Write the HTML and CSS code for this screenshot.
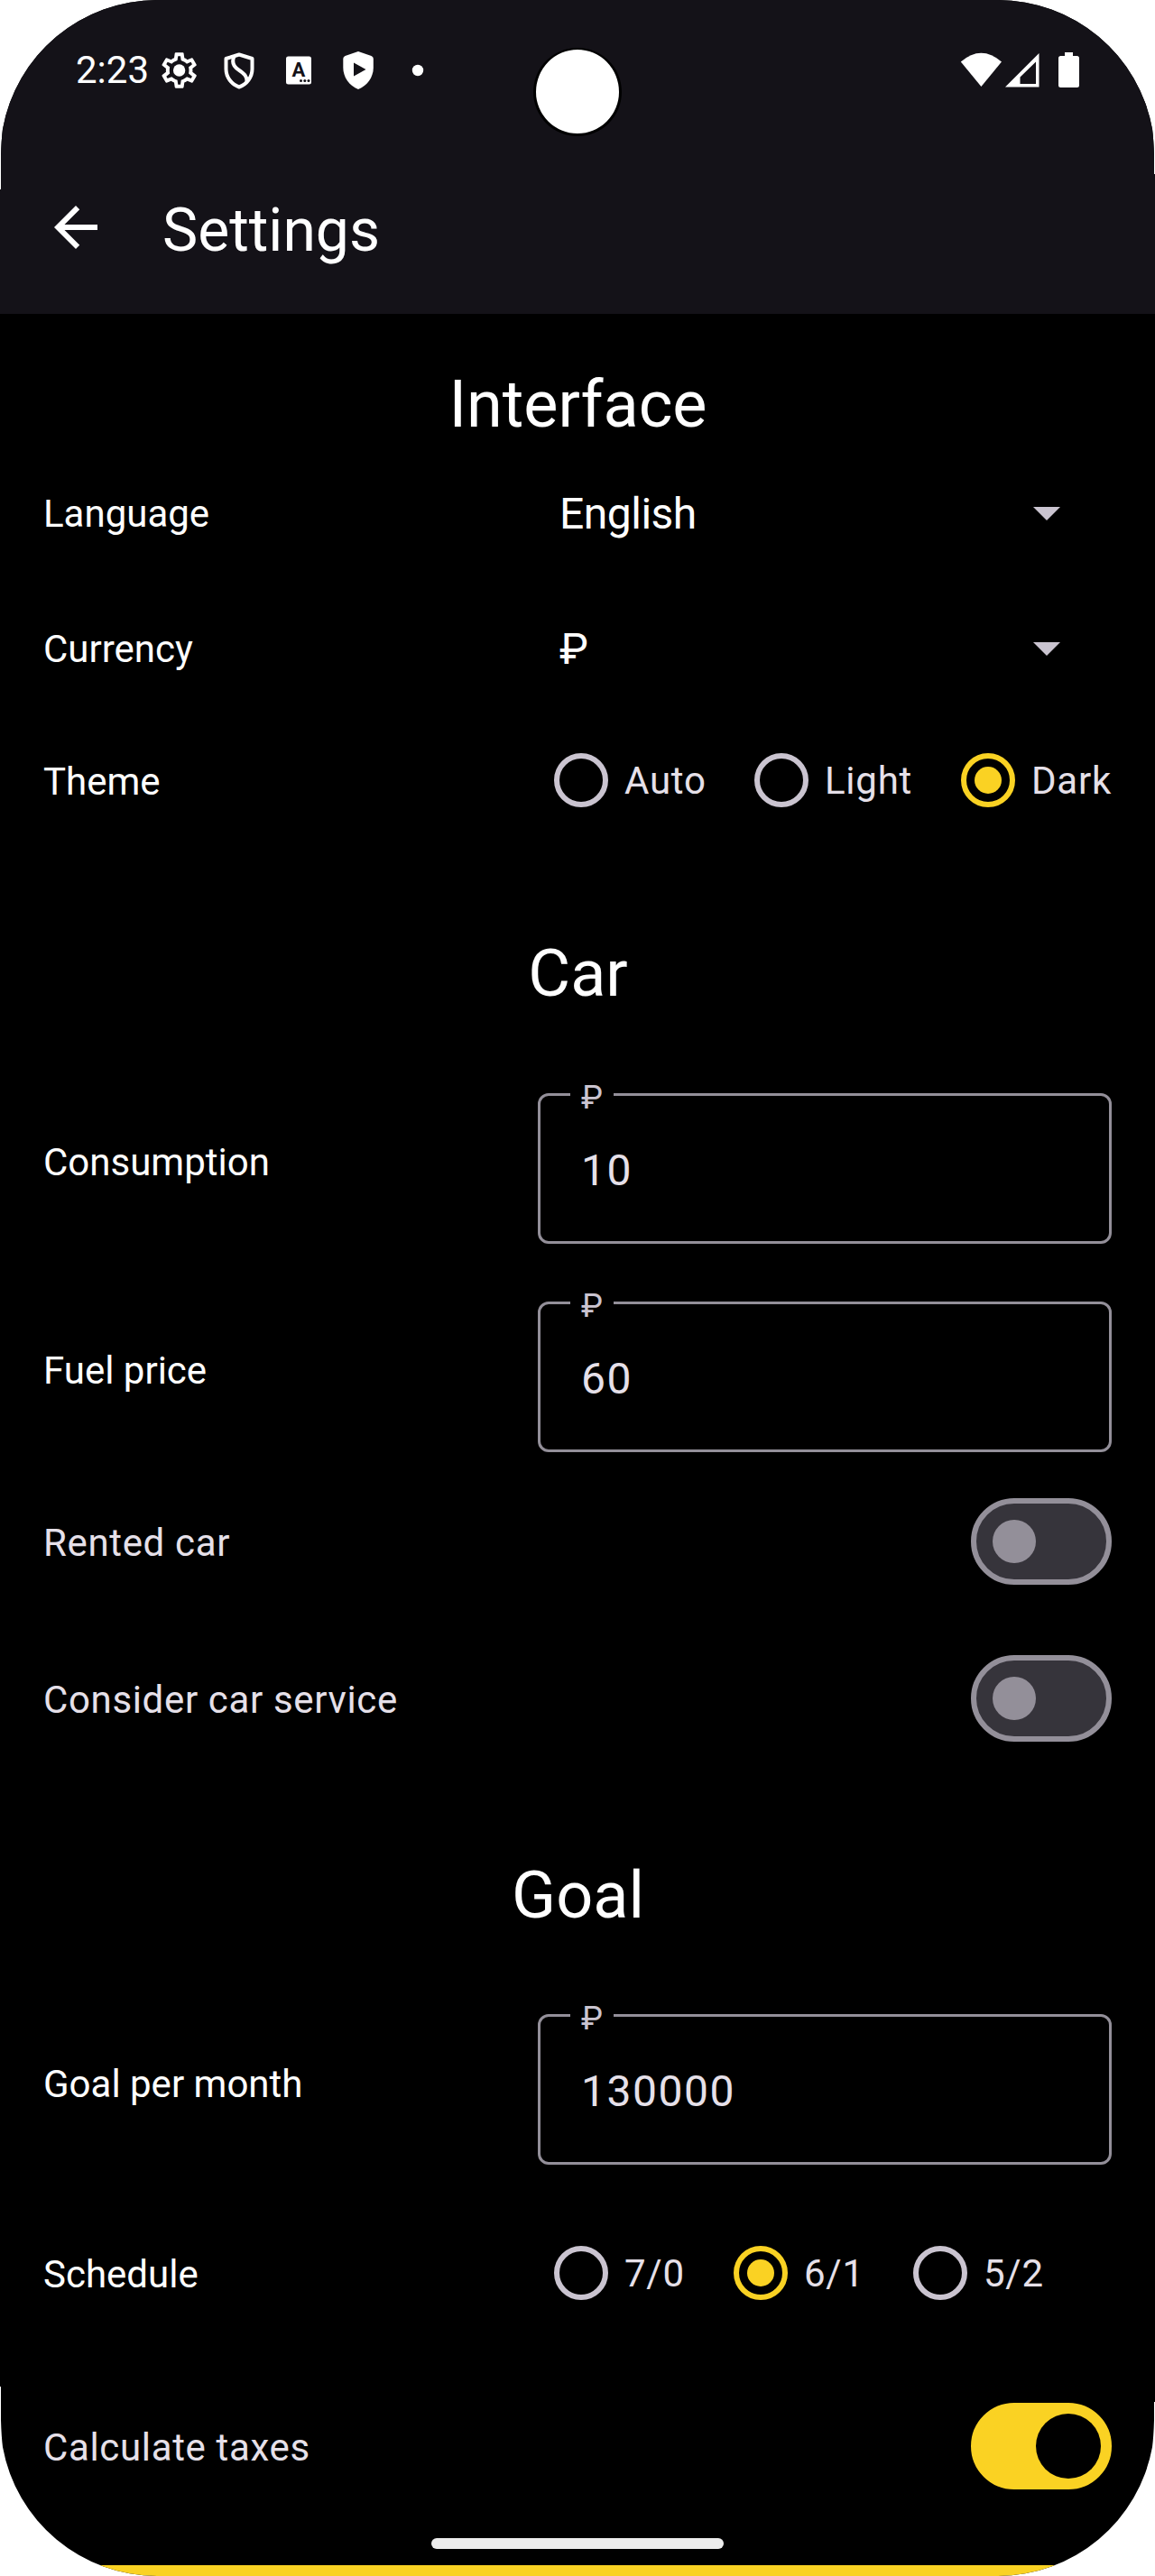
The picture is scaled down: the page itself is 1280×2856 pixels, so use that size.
FILE: index.html
```html
<!DOCTYPE html>
<html lang="en">
<head>
<meta charset="utf-8">
<title>Settings</title>
<link rel="stylesheet" href="styles.css">
</head>
<body>
<div class="screen">
  <header class="top">
    <div class="status">
      <span class="clock">2:23</span>
      <svg class="notices" width="300" height="48" viewBox="0 0 300 48" fill="#fff">
        <g transform="translate(3 0.3) scale(1.97)">
          <path d="M19.43 12.98c.04-.32.07-.64.07-.98 0-.34-.03-.66-.07-.98l2.11-1.65c.19-.15.24-.42.12-.64l-2-3.46c-.09-.16-.26-.25-.44-.25-.06 0-.12.01-.17.03l-2.49 1c-.52-.4-1.08-.73-1.69-.98l-.38-2.65C14.46 2.18 14.25 2 14 2h-4c-.25 0-.46.18-.49.42l-.38 2.65c-.61.25-1.17.59-1.69.98l-2.49-1c-.06-.02-.12-.03-.18-.03-.17 0-.34.09-.43.25l-2 3.46c-.13.22-.07.49.12.64l2.11 1.65c-.04.32-.07.65-.07.98 0 .33.03.66.07.98l-2.11 1.65c-.19.15-.24.42-.12.64l2 3.46c.09.16.26.25.44.25.06 0 .12-.01.17-.03l2.49-1c.52.4 1.08.73 1.69.98l.38 2.65c.03.24.24.42.49.42h4c.25 0 .46-.18.49-.42l.38-2.65c.61-.25 1.17-.59 1.69-.98l2.49 1c.06.02.12.03.18.03.17 0 .34-.09.43-.25l2-3.46c.12-.22.07-.49-.12-.64l-2.11-1.65zm-1.98-1.71c.04.31.05.52.05.73 0 .21-.02.43-.05.73l-.14 1.13.89.7 1.08.84-.7 1.21-1.27-.51-1.04-.42-.9.68c-.43.32-.84.56-1.25.73l-1.06.43-.16 1.13-.2 1.35h-1.4l-.19-1.35-.16-1.13-1.06-.43c-.43-.18-.83-.41-1.23-.71l-.91-.7-1.06.43-1.27.51-.7-1.21 1.08-.84.89-.7-.14-1.13c-.03-.31-.05-.54-.05-.74s.02-.43.05-.73l.14-1.13-.89-.7-1.08-.84.7-1.21 1.27.51 1.04.42.9-.68c.43-.32.84-.56 1.25-.73l1.06-.43.16-1.13.2-1.35h1.39l.19 1.35.16 1.13 1.06.43c.43.18.83.41 1.23.71l.91.7 1.06-.43 1.27-.51.7 1.21-1.07.85-.89.7.14 1.13z"/>
          <circle cx="12" cy="12" r="3.4"/>
        </g>
        <g fill="none" stroke="#fff" stroke-width="4" stroke-linejoin="round">
          <path d="M93 6.5 78.500 11V22.500C78.500 31.500 84.500 39.500 93 42.500C101.500 39.500 107.500 31.500 107.500 22.500V11Z"/>
          <path d="M87.500 8.500C84.500 15 87 20 92.500 23.500C98.500 27.500 102 30.500 101.500 37"/>
        </g>
        <rect x="145" y="8.500" width="28" height="31" rx="2.500"/>
        <text class="notice-letter" x="151.500" y="31">A</text>
        <g fill="#141218"><circle cx="161.500" cy="35.500" r="1.500"/><circle cx="165.800" cy="35.500" r="1.500"/><circle cx="170" cy="35.500" r="1.500"/></g>
        <path d="M225 3 210.500 8Q208.300 8.800 208.300 11V21C208.300 31.500 215 41 225 45C235 41 241.800 31.500 241.800 21V11Q241.800 8.800 239.500 8Z"/>
        <path d="M220 15.500V30.500L233.500 23Z" fill="#141218"/>
        <circle cx="291" cy="24" r="6.200"/>
      </svg>
      <svg class="signals" width="132" height="48" viewBox="0 0 132 48" fill="#fff">
        <path d="M0.800 14.500Q23.400 -5 46 14.500L23.400 42Z"/>
        <path fill-rule="evenodd" d="M50 42.500 87.500 5V42.500ZM66.500 39H84V14.500L66.500 31.500Z"/>
        <path d="M116 4h9v4h4.500q2.500 0 2.500 2.500v30q0 2.500-2.500 2.500h-18q-2.500 0-2.500-2.500v-30q0-2.500 2.500-2.500h4.500Z"/>
      </svg>
      <span class="camera"></span>
    </div>
    <div class="appbar">
      <svg width="72" height="72" viewBox="0 0 24 24" fill="#fff"><path d="M20 11H7.830l5.590-5.590L12 4l-8 8 8 8 1.410-1.410L7.830 13H20v-2z"/></svg>
      <h1 class="title">Settings</h1>
    </div>
  </header>

  <main class="content">
    <h2 class="heading heading-first">Interface</h2>
    <div class="row select-row">
      <span class="label">Language</span>
      <div class="select"><span>English</span><svg class="arrow" width="30" height="15" viewBox="0 0 10 5" fill="#cac4d0"><path d="M0 0H10L5 5Z"/></svg></div>
    </div>
    <div class="row select-row">
      <span class="label">Currency</span>
      <div class="select"><span>₽</span><svg class="arrow" width="30" height="15" viewBox="0 0 10 5" fill="#cac4d0"><path d="M0 0H10L5 5Z"/></svg></div>
    </div>
    <div class="row radio-row">
      <span class="label">Theme</span>
      <div class="radios themes">
        <span class="option"><i class="radio"></i><span class="option-text">Auto</span></span>
        <span class="option"><i class="radio"></i><span class="option-text">Light</span></span>
        <span class="option"><i class="radio on"></i><span class="option-text">Dark</span></span>
      </div>
    </div>

    <h2 class="heading heading-car">Car</h2>
    <div class="row field-row">
      <span class="label">Consumption</span>
      <div class="field"><span class="legend">₽</span>10</div>
    </div>
    <div class="row field-row">
      <span class="label">Fuel price</span>
      <div class="field"><span class="legend">₽</span>60</div>
    </div>
    <div class="row switch-row rented">
      <span class="label soft">Rented car</span>
      <span class="switch"></span>
    </div>
    <div class="row switch-row">
      <span class="label soft">Consider car service</span>
      <span class="switch"></span>
    </div>

    <h2 class="heading heading-goal">Goal</h2>
    <div class="row field-row goal-row">
      <span class="label">Goal per month</span>
      <div class="field"><span class="legend">₽</span>130000</div>
    </div>
    <div class="row radio-row schedule">
      <span class="label">Schedule</span>
      <div class="radios shifts">
        <span class="option"><i class="radio"></i><span class="option-text">7/0</span></span>
        <span class="option"><i class="radio on"></i><span class="option-text">6/1</span></span>
        <span class="option"><i class="radio"></i><span class="option-text">5/2</span></span>
      </div>
    </div>
    <div class="row switch-row taxes">
      <span class="label soft">Calculate taxes</span>
      <span class="switch checked"></span>
    </div>
  </main>
  <footer class="nav"><span class="handle"></span></footer>
</div>
</body>
</html>
```
FILE: styles.css
```css
* { box-sizing: border-box; }
body { margin: 0; background: #fff; font-family: Roboto, sans-serif; }

.screen {
  width: 1280px;
  height: 2856px;
  display: flex;
  flex-direction: column;
  background: #000;
  color: #fff;
  overflow: hidden;
  clip-path: path("M0 210H1V173Q1.500 155 3 143A174 174 0 0 1 174 0H1106A174 174 0 0 1 1277 143Q1278.500 155 1279 173V193H1280V2663H1279V2683Q1278.500 2701 1277 2713A174 174 0 0 1 1106 2856H174A174 174 0 0 1 3 2713Q1.500 2701 1 2683V2646H0Z");
}

.top { height: 348px; background: #141218; }
.status {
  position: relative;
  height: 156px;
  padding: 54px 84px 0 84px;
  display: flex;
  align-items: flex-start;
}
.clock { width: 88px; font-size: 42px; line-height: 48px; }
.notice-letter { font: 700 22px Roboto, sans-serif; fill: #141218; }
.signals { margin-left: auto; }
.camera {
  position: absolute;
  left: 591px;
  top: 53px;
  width: 98px;
  height: 98px;
  border: 3px solid #000;
  border-top-width: 2px;
  border-radius: 50%;
  background: #fff;
}
.appbar { height: 192px; padding-left: 48px; display: flex; align-items: center; }
.title { margin: 7px 0 0 60px; font-size: 66px; line-height: 84px; font-weight: 400; }

.content { flex: 1; padding: 0 48px; }
.heading { height: 93px; margin: 0; padding-left: 1px; font-size: 72px; line-height: 93px; font-weight: 400; text-align: center; }
.heading-first { margin-top: 54px; }
.heading-car { margin: 98px 0 86px; }
.heading-goal { margin: 84px 0 86px; padding-top: 1px; }

.row { display: grid; grid-template-columns: 548px 636px; align-items: center; }
.label { font-size: 42px; line-height: 60px; }
.soft { color: #e6e0e9; letter-spacing: 0.65px; padding-top: 3px; }

.select-row { height: 150px; }
.select { display: flex; align-items: center; justify-content: space-between; padding: 0 57px 0 24px; font-size: 48px; line-height: 60px; letter-spacing: -0.5px; }
.arrow { margin-bottom: 1px; }

.radio-row { height: 140px; }
.radio-row .label { padding-top: 3px; }
.radios { display: flex; padding-left: 18px; }
.option { display: flex; align-items: center; gap: 18px; font-size: 42px; line-height: 58px; letter-spacing: 0.75px; color: #e6e0e9; }
.option-text { padding-top: 2px; }
.themes .option { width: 222px; }
.themes .option:nth-child(2) { width: 229px; }
.themes .option:last-child { width: auto; }
.shifts .option { width: 199px; }
.radio { width: 60px; height: 60px; border: 6px solid #cac4d0; border-radius: 50%; display: grid; place-items: center; }
.radio.on { border-color: #fad223; }
.radio.on::after { content: ""; width: 30px; height: 30px; border-radius: 50%; background: #fad223; }

.field-row { height: 167px; margin-bottom: 64px; }
.field-row .label { padding-bottom: 14px; }
.goal-row .label { padding-bottom: 12px; }
.field {
  position: relative;
  height: 167px;
  padding: 3px 45px 0;
  border: 3px solid #938f99;
  border-radius: 12px;
  display: flex;
  align-items: center;
  font-size: 48px;
  letter-spacing: 1.5px;
  color: #e6e0e9;
}
.legend {
  position: absolute;
  left: 33px;
  top: -22px;
  width: 48px;
  padding-left: 12px;
  background: #000;
  color: #cac4d0;
  font-size: 36px;
  line-height: 48px;
}

.switch-row { height: 174px; grid-template-columns: 1028px 156px; }
.rented { margin-top: -52px; }
.switch { width: 156px; height: 96px; padding: 0 18px; border: 6px solid #938f99; border-radius: 48px; background: #36343b; display: flex; align-items: center; }
.switch::after { content: ""; width: 48px; height: 48px; border-radius: 50%; background: #938f99; }
.switch.checked { border-color: #fad223; background: #fad223; justify-content: flex-end; padding: 0 6px; }
.switch.checked::after { width: 72px; height: 72px; background: #000; }
.schedule { margin-top: -15px; height: 142px; }
.taxes { margin-top: 34px; }

.nav { height: 42px; border-bottom: 12px solid #fad223; display: flex; justify-content: center; }
.handle { width: 324px; height: 12px; border-radius: 6px; background: #ececec; }
```
